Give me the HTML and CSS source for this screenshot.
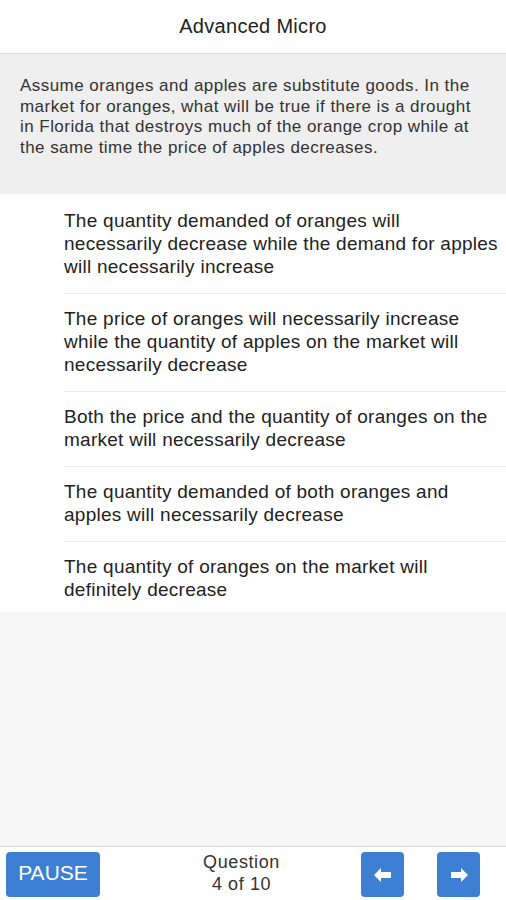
FILE: index.html
```html
<!DOCTYPE html>
<html lang="en">

<head>
    <meta charset="UTF-8">
    <meta name="viewport" content="width=device-width, initial-scale=1.0">
    <title>Advanced Micro</title>
    <link rel="stylesheet" href="styles.css">
</head>

<body>
    <div id="app">
        <header class="title-bar">Advanced Micro</header>
        <div class="question">
            Assume oranges and apples are substitute goods. In the market for oranges, what will be true if there is a drought in Florida that destroys much of the orange crop while at the same time the price of apples decreases.
        </div>
        <ul class="answers">
            <li class="answer">The quantity demanded of oranges will necessarily decrease while the demand for apples will necessarily increase</li>
            <li class="answer">The price of oranges will necessarily increase while the quantity of apples on the market will necessarily decrease</li>
            <li class="answer">Both the price and the quantity of oranges on the market will necessarily decrease</li>
            <li class="answer">The quantity demanded of both oranges and apples will necessarily decrease</li>
            <li class="answer">The quantity of oranges on the market will definitely decrease</li>
        </ul>
        <div class="spacer"></div>
        <footer class="footer">
            <button class="btn pause">PAUSE</button>
            <div class="counter">Question<br>4 of 10</div>
            <button class="btn arrow" aria-label="previous">
                <svg width="18" height="14" viewBox="0 0 18 14">
                    <path d="M0 7 L7 0 L7 4 L17 4 L17 10 L7 10 L7 14 Z" fill="#fff" />
                </svg>
            </button>
            <button class="btn arrow" aria-label="next">
                <svg width="18" height="14" viewBox="0 0 18 14">
                    <path d="M18 7 L11 0 L11 4 L1 4 L1 10 L11 10 L11 14 Z" fill="#fff" />
                </svg>
            </button>
        </footer>
    </div>
</body>

</html>
```

FILE: styles.css
```css
body {
    margin: 0;
    font-family: "Liberation Sans", Arial, sans-serif;
    color: #222;
}

#app {
    display: flex;
    flex-direction: column;
    height: 100vh;
}

.title-bar {
    height: 53px;
    line-height: 53px;
    text-align: center;
    font-size: 20px;
    letter-spacing: 0.3px;
    color: #222;
    border-bottom: 1px solid #dcdcdc;
}

.question {
    background-color: #efefef;
    padding: 22px 20px 36px 20px;
    font-size: 17px;
    letter-spacing: 0.45px;
    line-height: 20.5px;
    color: #333;
}

.answers {
    list-style: none;
    margin: 0;
    padding: 2px 0 0 0;
    background-color: #fff;
}

.answer {
    margin-left: 64px;
    padding: 13px 3px 15px 0;
    font-size: 19px;
    letter-spacing: 0.26px;
    line-height: 23px;
    border-bottom: 1px solid #ececec;
}

.answer:last-child {
    border-bottom: none;
    padding-bottom: 11px;
}

.spacer {
    flex: 1;
    background-color: #f6f6f6;
}

.footer {
    display: flex;
    align-items: center;
    height: 53px;
    padding: 0 26px 0 6px;
    border-top: 1px solid #d8d8d8;
    background-color: #fff;
}

.btn {
    border: none;
    border-radius: 4px;
    background-color: #3d7fd2;
    color: #fff;
    font-family: inherit;
    height: 45px;
    padding: 0;
    margin-top: 2px;
}

.btn:hover {
    cursor: pointer;
}

.pause {
    width: 94px;
    font-size: 21px;
    padding-bottom: 3px;
}

.counter {
    flex: 1;
    text-align: center;
    padding-left: 22px;
    padding-bottom: 2px;
    font-size: 18px;
    letter-spacing: 0.6px;
    line-height: 22px;
    color: #333;
}

.arrow {
    width: 43px;
    display: flex;
    align-items: center;
    justify-content: center;
}

.arrow+.arrow {
    margin-left: 33px;
}
```
